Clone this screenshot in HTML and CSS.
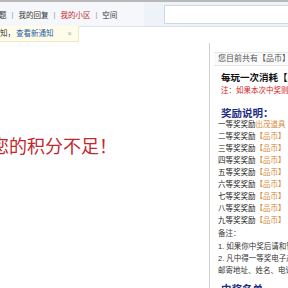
FILE: index.html
```html
<!DOCTYPE html>
<html lang="zh-CN">
<head>
    <meta charset="UTF-8">
    <title>积分不足</title>
    <link rel="stylesheet" href="styles.css">
</head>
<body>
    <div class="topbar">
        <div class="nav">
            <span class="cut">题</span>
            <span class="sep">|</span>
            <a href="#">我的回复</a>
            <span class="sep">|</span>
            <a href="#" class="current">我的小区</a>
            <span class="sep">|</span>
            <a href="#">空间</a>
        </div>
        <div class="search">
            <input type="text">
        </div>
    </div>

    <div class="notice">知，<a href="#">查看新通知</a><span class="close">×</span></div>

    <div class="main">
        <div class="content">
            <p class="warn">您的积分不足！</p>
        </div>
        <div class="side">
            <div class="balance">您目前共有【品币】</div>
            <div class="cost">每玩一次消耗【品币】</div>
            <div class="tip">注：如果本次中奖则不扣除</div>
            <h3>奖励说明：</h3>
            <ul class="prizes">
                <li>一等奖奖励<span class="coin">出茂道具</span></li>
                <li>二等奖奖励<span class="coin">【品币】</span></li>
                <li>三等奖奖励<span class="coin">【品币】</span></li>
                <li>四等奖奖励<span class="coin">【品币】</span></li>
                <li>五等奖奖励<span class="coin">【品币】</span></li>
                <li>六等奖奖励<span class="coin">【品币】</span></li>
                <li>七等奖奖励<span class="coin">【品币】</span></li>
                <li>八等奖奖励<span class="coin">【品币】</span></li>
                <li>九等奖奖励<span class="coin">【品币】</span></li>
            </ul>
            <div class="remark">备注：</div>
            <p class="rule">1. 如果你中奖后请和管理员联系</p>
            <p class="rule">2. 凡中得一等奖电子产品的请留下</p>
            <p class="rule">邮寄地址、姓名、电话</p>
            <h3 class="winners">中奖名单</h3>
        </div>
    </div>
</body>
</html>
```

FILE: styles.css
```css
body {
    margin: 0;
    width: 288px;
    height: 288px;
    overflow: hidden;
    position: relative;
    font-family: "Liberation Sans", "Noto Sans CJK SC", sans-serif;
    background: #fff;
    color: #333;
}
a { text-decoration: none; }

.topbar {
    display: flex;
    align-items: center;
    height: 24px;
    border-top: 2px solid #b8b8b8;
    border-bottom: 1px solid #dfe3ea;
    background: #f6f7fb;
}
.nav {
    display: flex;
    align-items: center;
    gap: 5px;
    font-size: 7.5px;
    margin-left: -1px;
    flex: 1;
    white-space: nowrap;
}
.nav a { color: #333; }
.nav a.current { color: #c0272d; }
.nav .sep { color: #999; }
.search {
    width: 144px;
    height: 24px;
    display: flex;
    align-items: center;
    background: #eef3fa;
    padding-left: 20px;
    box-sizing: border-box;
}
.search input {
    flex: 1;
    height: 17px;
    margin: 0;
    padding: 0;
    border: 1px solid #d3d7de;
    border-right: none;
    background: #fff;
}

.notice {
    position: absolute;
    top: 26px;
    left: 0;
    width: 78px;
    height: 15px;
    line-height: 15px;
    font-size: 7.5px;
    background: #fffdea;
    border: 1px solid #ece7c4;
    border-top: none;
    border-left: none;
    white-space: nowrap;
    color: #333;
}
.notice a { color: #2a5ea8; margin-left: 1px; }
.notice .close {
    color: #aaa;
    margin-left: 14px;
}

.main {
    display: flex;
}
.content {
    width: 209px;
    flex-shrink: 0;
}
.warn {
    margin: 105px 0 0 -9px;
    font-family: "Liberation Serif", "Noto Sans CJK SC", serif;
    font-size: 18px;
    color: #c0282e;
    white-space: nowrap;
}
.side {
    flex: 1;
    border-left: 1px solid #cfcfcf;
    margin-top: 16px;
    padding: 9px 0 0 8px;
    white-space: nowrap;
    overflow: hidden;
    font-size: 7.5px;
    line-height: 12px;
}
.balance {
    color: #555;
    font-size: 8px;
    border-top: 1px solid #e6e6e6;
    border-bottom: 1px solid #e6e6e6;
    background: #fafafa;
    margin-left: -4px;
    padding-left: 4px;
}
.cost {
    margin-top: 5px;
    font-size: 9.5px;
    line-height: 14px;
    font-weight: bold;
    color: #111;
    padding-left: 3px;
}
.tip {
    color: #d42020;
    padding-left: 3px;
}
.side h3 {
    margin: 10px 0 0;
    font-size: 10.5px;
    line-height: 12px;
    color: #1d2d86;
    padding-left: 3px;
}
.prizes {
    list-style: none;
    margin: 0;
    padding: 0;
    color: #222;
}
.coin { color: #d58a3b; }
.remark {
    margin-top: 1px;
    color: #444;
}
.rule {
    margin: 0;
    color: #333;
}
.remark + .rule { margin-top: 1px; }
.side h3.winners { margin-top: 6px; }
```
